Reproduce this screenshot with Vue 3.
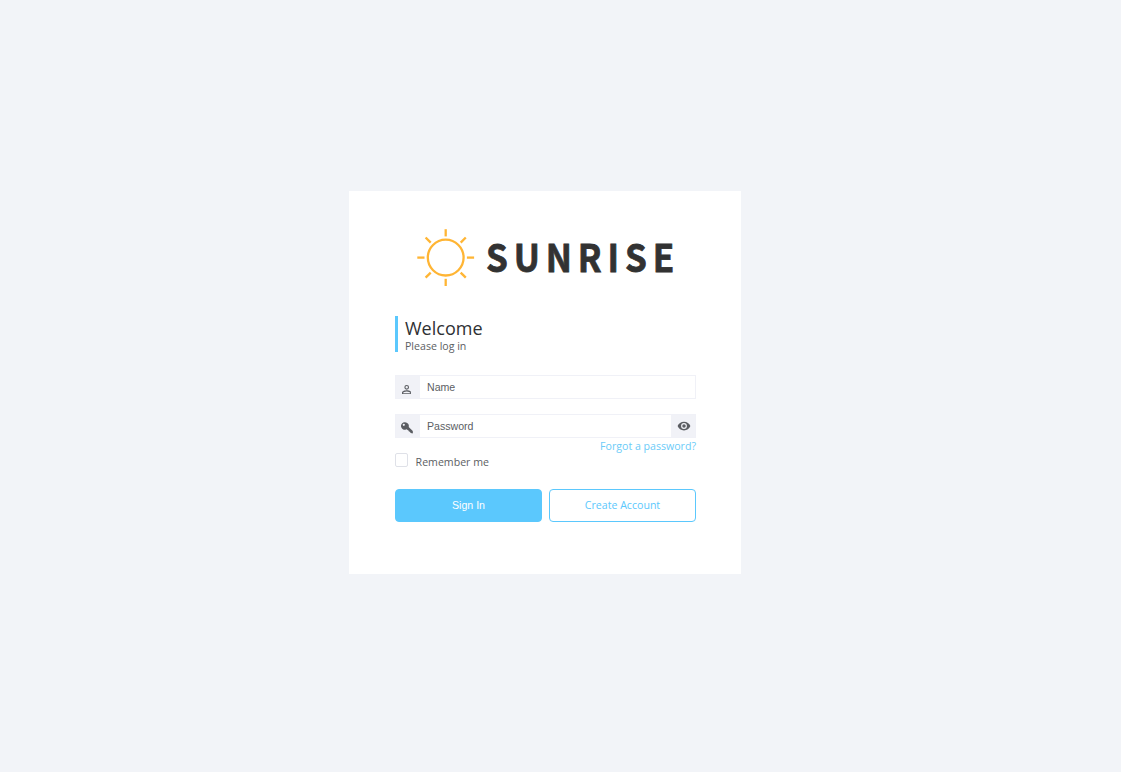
<script setup>
import { ref } from 'vue'

const name = ref('')
const password = ref('')
const remember = ref(false)
const visible = ref(false)
const rays = [0, 45, 90, 135, 180, 225, 270, 315]
</script>

<template>
  <main class="page">
    <form class="card" @submit.prevent>
      <div class="logo">
        <svg class="sun" width="58" height="58" viewBox="-28.7 -28.6 58 58">
          <circle r="17.9" />
          <line v-for="a in rays" :key="a" y1="-21.2" y2="-28.4" :transform="`rotate(${a})`" />
        </svg>
        <span class="wordmark">SUNRISE</span>
      </div>

      <header class="welcome">
        <h1>Welcome</h1>
        <p>Please log in</p>
      </header>

      <label class="field">
        <span class="addon">
          <svg class="person" width="9.4" height="9.4" viewBox="4 4 16 16">
            <path d="M12 5.9a2.1 2.1 0 1 1 0 4.2 2.1 2.1 0 0 1 0-4.2m0 9c2.97 0 6.1 1.46 6.1 2.1v1.1H5.9V17c0-.64 3.13-2.1 6.1-2.1M12 4a4 4 0 1 0 0 8 4 4 0 0 0 0-8zm0 9c-2.67 0-8 1.34-8 4v3h16v-3c0-2.66-5.33-4-8-4z" />
          </svg>
        </span>
        <input v-model="name" type="text" placeholder="Name" />
      </label>

      <label class="field second">
        <span class="addon">
          <svg class="key" width="12" height="12" viewBox="0 0 12 12">
            <path fill-rule="evenodd" d="M4 .2a3.8 3.8 0 1 0 1 7.4l.8-.3.7.8 1 .3.4 1 1 .3.5 1 1.9.9.6-.6-.1-1.9-4.1-4A3.8 3.8 0 0 0 4 .2zM2.8 1.7a1.1 1.1 0 1 1 0 2.2 1.1 1.1 0 0 1 0-2.2z" />
          </svg>
        </span>
        <input v-model="password" :type="visible ? 'text' : 'password'" placeholder="Password" />
        <button class="addon eye" type="button" @click="visible = !visible">
          <svg width="14" height="14" viewBox="0 0 24 24">
            <path d="M12 4.5C7 4.5 2.73 7.61 1 12c1.73 4.39 6 7.5 11 7.5s9.27-3.11 11-7.5c-1.73-4.39-6-7.5-11-7.5zM12 17a5 5 0 1 1 0-10 5 5 0 0 1 0 10zm0-8a3 3 0 1 0 0 6 3 3 0 0 0 0-6z" />
          </svg>
        </button>
      </label>

      <a class="forgot">Forgot a password?</a>

      <label class="remember">
        <input v-model="remember" type="checkbox" />
        <span>Remember me</span>
      </label>

      <div class="actions">
        <button class="primary" type="submit">Sign In</button>
        <a class="secondary">Create Account</a>
      </div>
    </form>
  </main>
</template>

<style>
body {
  background: #f2f4f8;
}
</style>

<style scoped>
.page {
  box-sizing: border-box;
  height: 772px;
  padding: 191px 0 0 349px;
  background: #f2f4f8;
  font-family: "Open Sans", sans-serif;
  font-size: 10.6px;
  color: #5b5e63;
}
.card {
  box-sizing: border-box;
  width: 392px;
  height: 383px;
  padding: 38px 45px 0 46px;
  background: #fff;
}
.logo {
  display: flex;
  align-items: center;
  height: 57.4px;
  padding-left: 22px;
}
.sun {
  flex: none;
}
.sun circle,
.sun line {
  fill: none;
  stroke: #ffb534;
  stroke-width: 2.3;
}
.wordmark {
  margin: -3px 0 0 10.5px;
  font: 700 38px/58px "Noto Sans CJK JP", sans-serif;
  letter-spacing: 6.4px;
  color: #323232;
  -webkit-text-stroke: 0.8px #323232;
  transform: scaleX(0.92);
  transform-origin: left center;
}
.welcome {
  box-sizing: border-box;
  height: 36px;
  margin-top: 30px;
  padding-left: 7px;
  border-left: 3px solid #5bc8fd;
}
h1 {
  margin: 0;
  font-size: 18px;
  font-weight: 400;
  line-height: 24px;
  color: #2e3033;
}
p {
  margin: 0;
  line-height: 12px;
}
.field {
  box-sizing: border-box;
  display: flex;
  height: 24px;
  margin-top: 22.6px;
  border: 1px solid #f0f1f7;
}
.field.second {
  margin-top: 15px;
}
.addon {
  flex: none;
  display: flex;
  align-items: center;
  justify-content: center;
  width: 24px;
  background: #f1f2f7;
  fill: #5b5d62;
}
.person {
  margin: 5px 0 0 -3px;
}
.key {
  margin: 4px 0 0 -2px;
}
.eye {
  border: 0;
  padding: 0 0 0 1px;
}
.field input {
  flex: 1;
  min-width: 0;
  border: 0;
  outline: 0;
  padding: 0 7px;
  background: transparent;
  font: 10.6px "Liberation Sans", sans-serif;
  color: #5b5e63;
}
.field input::placeholder {
  color: #5b5e63;
  opacity: 1;
}
.forgot {
  display: block;
  text-align: right;
  line-height: 15px;
  margin-top: 1px;
  color: #6bcbf8;
}
.remember {
  display: flex;
  align-items: flex-start;
  height: 15px;
  line-height: 16px;
}
.remember input {
  appearance: none;
  box-sizing: border-box;
  width: 13px;
  height: 14px;
  margin: -1px 7.6px 0 0;
  border: 1px solid #dfe1e8;
  border-radius: 2px;
  background: #fff;
}
.actions {
  display: grid;
  grid-template-columns: 1fr 1fr;
  gap: 7px;
  margin-top: 20.4px;
}
.primary,
.secondary {
  box-sizing: border-box;
  height: 32.5px;
  border: 1px solid #5bc8fd;
  border-radius: 4px;
  padding: 0;
  text-align: center;
}
.primary {
  padding-bottom: 1px;
  background: #5bc8fd;
  color: #fff;
  font: 10.6px "Liberation Sans", sans-serif;
}
.secondary {
  line-height: 31px;
  color: #5bc8fd;
}
</style>
